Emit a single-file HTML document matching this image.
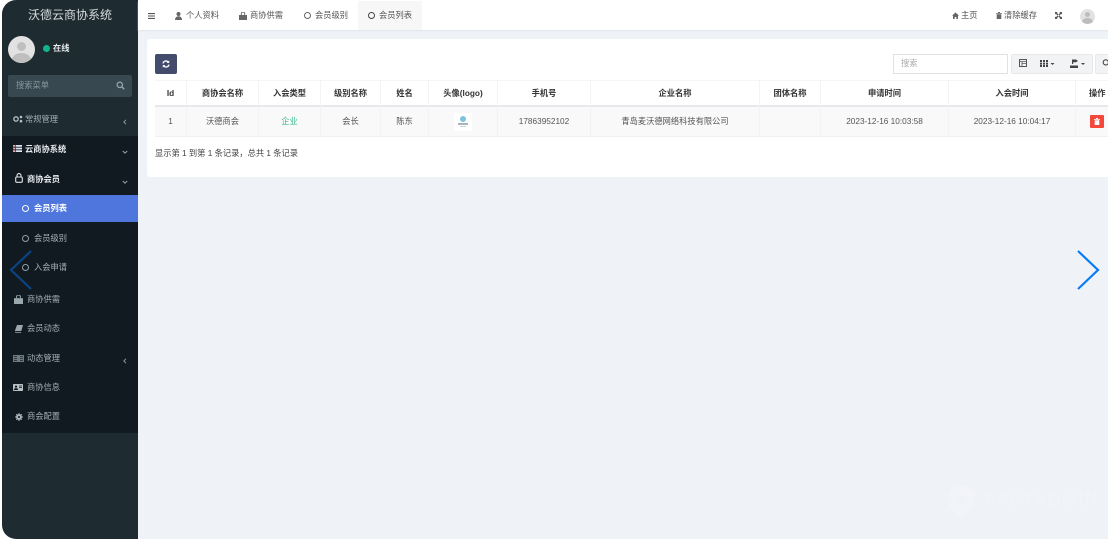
<!DOCTYPE html>
<html lang="zh-CN">
<head>
<meta charset="utf-8">
<title>沃德云商协系统</title>
<style>
*{box-sizing:border-box;margin:0;padding:0}
html,body{width:1111px;height:543px;overflow:hidden;background:#fff}
body{font-family:"Liberation Sans","Noto Sans CJK SC",sans-serif;font-size:8.25px;color:#555;position:relative}
#stage{position:absolute;left:0;top:0;width:1108px;height:540px;overflow:hidden;background:#fff;filter:blur(.3px)}
.a{position:absolute;white-space:nowrap}
svg{display:block}
#main{left:138px;top:1px;width:970px;height:538px;background:#eff3f7}
#side{left:2px;top:0;width:136px;height:539px;background:#1e2b31;border-radius:14px 0 0 14px;overflow:hidden}
#dark{left:2px;top:136px;width:136px;height:297px;background:#111a20}
#active{left:2px;top:195px;width:136px;height:27px;background:#4f76dd}
.m{color:#a3afb6;line-height:12px}
.m.w{color:#e6ebee;font-weight:bold}
.nav{color:#555;line-height:12px}
.ring{width:7px;height:7px;border-radius:50%;border:1.4px solid #8fa0a8}
.cv{width:6px;height:6px}
#head{left:138px;top:1px;width:970px;height:29px;background:#fff;box-shadow:0 1px 1px #e3e7ec}
#card{left:147px;top:39px;width:961px;height:138px;background:#fff;border-radius:3px 0 0 3px}
.th{top:80px;height:27px;line-height:26px;text-align:center;font-weight:bold;color:#333;border-right:1px solid #f3f4f6;border-bottom:2px solid #e6e8eb;border-top:1px solid #f4f5f6}
.td{top:107px;height:30px;line-height:29px;text-align:center;color:#555;background:#f9f9f9;border-right:1px solid #f1f2f3;border-bottom:1px solid #f0f1f2}
.btn{top:54px;height:20px;background:#f2f3f4;border:1px solid #e6e8ea}
</style>
</head>
<body>
<div id="stage">
<div id="main" class="a"></div>
<div id="side" class="a"></div>
<div id="dark" class="a"></div>
<div id="active" class="a"></div>

<!-- sidebar head -->
<div class="a" style="left:2px;top:7px;width:136px;text-align:center;font-size:12px;line-height:17px;color:#d6dcdf">沃德云商协系统</div>
<div class="a" style="left:8px;top:36px;width:27px;height:27px;border-radius:50%;background:#e2e2e2;overflow:hidden">
  <div class="a" style="left:9px;top:6px;width:9px;height:9px;border-radius:50%;background:#bfbfbf"></div>
  <div class="a" style="left:4px;top:17px;width:19px;height:14px;border-radius:50%;background:#bfbfbf"></div>
</div>
<div class="a" style="left:43px;top:45px;width:7px;height:7px;border-radius:50%;background:#12b48c"></div>
<div class="a m w" style="left:53px;top:43px">在线</div>
<div class="a" style="left:8px;top:75px;width:124px;height:22px;background:#374850;border-radius:2px"></div>
<div class="a" style="left:16px;top:80px;color:#8a979e;line-height:12px">搜索菜单</div>
<svg class="a" style="left:116px;top:81px" width="9" height="9" viewBox="0 0 9 9"><circle cx="3.8" cy="3.8" r="2.7" fill="none" stroke="#9aa7ae" stroke-width="1.2"/><path d="M5.8 5.8L8.2 8.2" stroke="#9aa7ae" stroke-width="1.4"/></svg>

<!-- menu -->
<svg class="a" style="left:13px;top:115px" width="10" height="8" viewBox="0 0 10 8"><circle cx="3" cy="4" r="2.2" fill="none" stroke="#b6c0c5" stroke-width="1.3"/><circle cx="8" cy="2" r="1.3" fill="#b6c0c5"/><circle cx="8" cy="6.2" r="1.3" fill="#b6c0c5"/></svg>
<div class="a m" style="left:25px;top:114px">常规管理</div>
<svg class="a cv" style="left:122px;top:119px" viewBox="0 0 6 6"><path d="M4 .8L1.8 3 4 5.2" fill="none" stroke="#8a979e" stroke-width="1"/></svg>

<svg class="a" style="left:13px;top:145px" width="9" height="7" viewBox="0 0 9 7"><path d="M0 0h2v1.8H0zM0 2.6h2v1.8H0zM0 5.2h2V7H0z" fill="#e6a8a8"/><path d="M2.6 0H9v1.8H2.6zM2.6 2.6H9v1.8H2.6zM2.6 5.2H9V7H2.6z" fill="#e0e4f0"/></svg>
<div class="a m w" style="left:25px;top:144px">云商协系统</div>
<svg class="a cv" style="left:122px;top:149px" viewBox="0 0 6 6"><path d="M.8 2L3 4.2 5.2 2" fill="none" stroke="#9aa7ae" stroke-width="1"/></svg>

<svg class="a" style="left:15px;top:173px" width="8" height="10" viewBox="0 0 8 10"><rect x=".7" y="4" width="6.6" height="5.3" rx="1" fill="none" stroke="#dfe5e8" stroke-width="1.1"/><path d="M2 4V2.6a2 2 0 0 1 4 0V4" fill="none" stroke="#dfe5e8" stroke-width="1.1"/></svg>
<div class="a m w" style="left:27px;top:174px">商协会员</div>
<svg class="a cv" style="left:122px;top:179px" viewBox="0 0 6 6"><path d="M.8 2L3 4.2 5.2 2" fill="none" stroke="#9aa7ae" stroke-width="1"/></svg>

<div class="a ring" style="left:22px;top:205px;border-color:#fff"></div>
<div class="a m w" style="left:34px;top:203px;color:#fff">会员列表</div>
<div class="a ring" style="left:22px;top:235px"></div>
<div class="a m" style="left:34px;top:233px">会员级别</div>
<div class="a ring" style="left:22px;top:264px"></div>
<div class="a m" style="left:34px;top:262px">入会申请</div>

<svg class="a" style="left:14px;top:295px" width="9" height="9" viewBox="0 0 9 9"><path d="M0 3.2h9V9H0z" fill="#9aa7ae"/><path d="M2.6 3.2V1.6a1.9 1.6 0 0 1 3.8 0v1.6" fill="none" stroke="#9aa7ae" stroke-width="1"/></svg>
<div class="a m" style="left:27px;top:294px">商协供需</div>
<svg class="a" style="left:15px;top:325px" width="8" height="8" viewBox="0 0 8 8"><path d="M2 0h6L6.3 6H.6C0 6 0 7.2.6 7.2H6.4L6 8H1C-.3 8-.3 6 .3 4.6z" fill="#9aa7ae"/></svg>
<div class="a m" style="left:27px;top:323px">会员动态</div>
<svg class="a" style="left:13px;top:355px" width="11" height="7" viewBox="0 0 11 7"><rect width="11" height="7" fill="#6d7a81"/><path d="M1 1.5h3M1 3.5h3M1 5.5h3M7 1.5h3M7 3.5h3M7 5.5h3" stroke="#1a252b" stroke-width=".8"/></svg>
<div class="a m" style="left:27px;top:353px">动态管理</div>
<svg class="a cv" style="left:122px;top:358px" viewBox="0 0 6 6"><path d="M4 .8L1.8 3 4 5.2" fill="none" stroke="#8a979e" stroke-width="1"/></svg>
<svg class="a" style="left:13px;top:384px" width="10" height="7" viewBox="0 0 10 7"><rect width="10" height="7" rx=".7" fill="#b6c0c5"/><circle cx="3" cy="2.6" r="1.1" fill="#111a20"/><path d="M1.3 5.6c.3-1.5 3.1-1.5 3.4 0zM6 2h3M6 3.6h3" fill="#111a20" stroke="#111a20" stroke-width=".7"/></svg>
<div class="a m" style="left:27px;top:382px">商协信息</div>
<svg class="a" style="left:15px;top:413px" width="8" height="8" viewBox="0 0 8 8"><circle cx="4" cy="4" r="2.2" fill="none" stroke="#a8b3b9" stroke-width="1.6"/><path d="M4 0v8M0 4h8M1.2 1.2l5.6 5.6M6.8 1.2L1.2 6.8" stroke="#a8b3b9" stroke-width="1"/><circle cx="4" cy="4" r="1" fill="#111a20"/></svg>
<div class="a m" style="left:27px;top:411px">商会配置</div>

<!-- header -->
<div id="head" class="a"></div>
<svg class="a" style="left:148px;top:13px" width="7" height="6" viewBox="0 0 7 6"><path d="M0 .6h7M0 3h7M0 5.4h7" stroke="#555" stroke-width="1.1"/></svg>
<svg class="a" style="left:175px;top:12px" width="7" height="8" viewBox="0 0 7 8"><circle cx="3.5" cy="2" r="2" fill="#666"/><path d="M0 8c0-5 7-5 7 0z" fill="#666"/></svg>
<div class="a nav" style="left:186px;top:10px">个人资料</div>
<svg class="a" style="left:239px;top:12px" width="8" height="8" viewBox="0 0 8 8"><path d="M0 3h8v5H0z" fill="#666"/><path d="M2.3 3V1.5a1.7 1.4 0 0 1 3.4 0V3" fill="none" stroke="#666" stroke-width=".9"/></svg>
<div class="a nav" style="left:250px;top:10px">商协供需</div>
<div class="a ring" style="left:304px;top:12px;border-color:#666"></div>
<div class="a nav" style="left:315px;top:10px">会员级别</div>
<div class="a" style="left:358px;top:1px;width:64px;height:29px;background:#f7f7f7"></div>
<div class="a ring" style="left:368px;top:12px;border-color:#444"></div>
<div class="a nav" style="left:379px;top:10px">会员列表</div>

<svg class="a" style="left:952px;top:12px" width="7" height="7" viewBox="0 0 7 7"><path d="M3.5 .5L7 3.6H6V7H4.3V5H2.7v2H1V3.6H0z" fill="#666"/></svg>
<div class="a nav" style="left:961px;top:10px">主页</div>
<svg class="a" style="left:996px;top:12px" width="6" height="7" viewBox="0 0 6 7"><path d="M0 1.2h6v.8H0zM2 0h2v1H2zM.7 2.3h4.6V7H.7z" fill="#666"/></svg>
<div class="a nav" style="left:1004px;top:10px">清除缓存</div>
<svg class="a" style="left:1055px;top:12px" width="7" height="7" viewBox="0 0 7 7"><path d="M0 0h2.6L1.8 .8 3.5 2.6 2.6 3.5.8 1.8 0 2.6zM7 0v2.6l-.8-.8-1.7 1.7-1-.9L5.2.8 4.4 0zM0 7V4.4l.8.8 1.8-1.7.9 1L1.8 6.2l.8.8zM7 7H4.4l.8-.8-1.7-1.7.9-1 1.8 1.8.8-.8z" fill="#555"/></svg>
<div class="a" style="left:1080px;top:9px;width:15px;height:15px;border-radius:50%;background:#e2e2e2;overflow:hidden">
  <div class="a" style="left:5px;top:3px;width:5px;height:5px;border-radius:50%;background:#bdbdbd"></div>
  <div class="a" style="left:2px;top:9px;width:11px;height:8px;border-radius:50%;background:#bdbdbd"></div>
</div>

<!-- card -->
<div id="card" class="a"></div>
<div class="a" style="left:155px;top:54px;width:22px;height:20px;background:#444c6e;border-radius:2px"></div>
<svg class="a" style="left:162px;top:60px" width="8" height="8" viewBox="0 0 8 8"><path d="M1 3.4A3 3 0 0 1 6.2 2M7 4.6A3 3 0 0 1 1.8 6" fill="none" stroke="#fff" stroke-width="1.3"/><path d="M7.2 .4v2.6H4.6zM.8 7.6V5h2.6z" fill="#fff"/></svg>

<div class="a" style="left:893px;top:54px;width:115px;height:20px;border:1px solid #dfe2e6;background:#fff;color:#aaa;line-height:18px;padding-left:7px">搜索</div>
<div class="a btn" style="left:1011px;width:23px;border-radius:2px 0 0 2px"></div>
<svg class="a" style="left:1019px;top:59px" width="8" height="8" viewBox="0 0 8 8"><rect x=".5" y=".5" width="7" height="7" fill="none" stroke="#555"/><path d="M1 2.6h6M3 2.6V7M3 4.6h4" stroke="#555" stroke-width=".8"/></svg>
<div class="a btn" style="left:1033px;width:30px;border-left:0"></div>
<svg class="a" style="left:1040px;top:60px" width="15" height="7" viewBox="0 0 15 7"><path d="M0 0h2v2H0zM3 0h2v2H3zM6 0h2v2H6zM0 2.6h2v2H0zM3 2.6h2v2H3zM6 2.6h2v2H6zM0 5h2v2H0zM3 5h2v2H3zM6 5h2v2H6z" fill="#444"/><path d="M10.5 3h4l-2 2z" fill="#444"/></svg>
<div class="a btn" style="left:1062px;width:31px;border-left:0;border-radius:0 2px 2px 0"></div>
<svg class="a" style="left:1070px;top:59px" width="16" height="9" viewBox="0 0 16 9"><path d="M2 3.5V.5h4l2 1.5-2 1.2H3.2V5H2z" fill="#444"/><path d="M0 6.5h8V9H0z" fill="#444"/><path d="M11 4h4l-2 2z" fill="#444"/></svg>
<div class="a btn" style="left:1095px;width:13px;border-right:0;border-radius:2px 0 0 2px"></div>
<svg class="a" style="left:1102px;top:59px" width="6" height="8" viewBox="0 0 6 8"><circle cx="3.8" cy="3.4" r="2.6" fill="none" stroke="#444" stroke-width="1.1"/></svg>

<!-- table head -->
<div class="a th" style="left:155px;width:32px">Id</div>
<div class="a th" style="left:187px;width:72px">商协会名称</div>
<div class="a th" style="left:259px;width:62px">入会类型</div>
<div class="a th" style="left:321px;width:60px">级别名称</div>
<div class="a th" style="left:381px;width:48px">姓名</div>
<div class="a th" style="left:429px;width:69px">头像(logo)</div>
<div class="a th" style="left:498px;width:93px">手机号</div>
<div class="a th" style="left:591px;width:169px">企业名称</div>
<div class="a th" style="left:760px;width:61px">团体名称</div>
<div class="a th" style="left:821px;width:128px">申请时间</div>
<div class="a th" style="left:949px;width:127px">入会时间</div>
<div class="a th" style="left:1076px;width:32px;padding-left:13px;text-align:left;border-right:0">操作</div>

<!-- table row -->
<div class="a td" style="left:155px;width:32px">1</div>
<div class="a td" style="left:187px;width:72px">沃德商会</div>
<div class="a td" style="left:259px;width:62px;color:#3cb88f">企业</div>
<div class="a td" style="left:321px;width:60px">会长</div>
<div class="a td" style="left:381px;width:48px">陈东</div>
<div class="a td" style="left:429px;width:69px"></div>
<div class="a" style="left:454px;top:113px;width:18px;height:18px;background:#fff"></div>
<div class="a" style="left:460px;top:116px;width:6px;height:6px;border-radius:50%;background:#7cc3e0"></div>
<div class="a" style="left:458px;top:123px;width:10px;height:2px;background:#a9b4ba"></div>
<div class="a" style="left:460px;top:126px;width:6px;height:1px;background:#ccd2d6"></div>
<div class="a td" style="left:498px;width:93px">17863952102</div>
<div class="a td" style="left:591px;width:169px">青岛麦沃德网络科技有限公司</div>
<div class="a td" style="left:760px;width:61px"></div>
<div class="a td" style="left:821px;width:128px">2023-12-16 10:03:58</div>
<div class="a td" style="left:949px;width:127px">2023-12-16 10:04:17</div>
<div class="a td" style="left:1076px;width:32px;border-right:0"></div>
<div class="a" style="left:1090px;top:115px;width:14px;height:13px;background:#f4483c;border-radius:1px"></div>
<svg class="a" style="left:1094px;top:118px" width="6" height="7" viewBox="0 0 6 7"><path d="M0 1.2h6v.8H0zM2 0h2v1H2zM.7 2.3h4.6V7H.7z" fill="#fff"/></svg>

<div class="a" style="left:155px;top:148px;line-height:12px;color:#444">显示第 1 到第 1 条记录，总共 1 条记录</div>

<!-- carousel arrows -->
<svg class="a" style="left:8px;top:248px" width="26" height="44" viewBox="0 0 26 44"><path d="M23 3L3 22l20 19" fill="none" stroke="#0b4483" stroke-width="2.2"/></svg>
<svg class="a" style="left:1075px;top:248px" width="26" height="44" viewBox="0 0 26 44"><path d="M3 3l20 19L3 41" fill="none" stroke="#0a7bf5" stroke-width="2.2"/></svg>

<!-- watermark -->
<svg class="a" style="left:948px;top:485px" width="27" height="32" viewBox="0 0 27 32"><path d="M13.5 0C20 0 27 6 27 14c0 8-7 14-13.5 18C7 28 0 22 0 14 0 6 7 0 13.5 0z" fill="#f2f4f7"/><path d="M16 6L8 18h5l-2 8 8-12h-5z" fill="#eff3f7"/></svg>
<div class="a" style="left:985px;top:490px;font-size:18px;line-height:20px;letter-spacing:1.4px;color:#f2f4f7">FASTADMIN</div>
</div>
</body>
</html>
